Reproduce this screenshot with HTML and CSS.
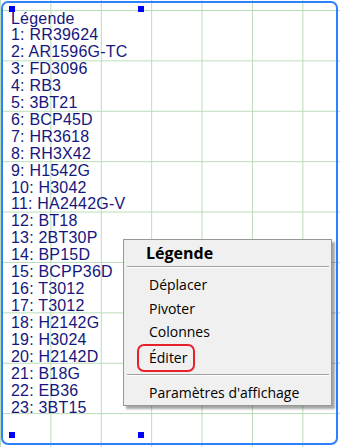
FILE: index.html
```html
<!DOCTYPE html>
<html lang="fr">
<head>
    <meta charset="UTF-8">
    <meta name="viewport" content="width=device-width, initial-scale=1.0">
    <title>Légende</title>
    <link rel="stylesheet" href="styles.css">
</head>
<body>
    <div class="canvas">
        <div class="legend">
            <div class="legend-title">Légende</div>
            <div>1: RR39624</div>
            <div>2: AR1596G-TC</div>
            <div>3: FD3096</div>
            <div>4: RB3</div>
            <div>5: 3BT21</div>
            <div>6: BCP45D</div>
            <div>7: HR3618</div>
            <div>8: RH3X42</div>
            <div>9: H1542G</div>
            <div>10: H3042</div>
            <div>11: HA2442G-V</div>
            <div>12: BT18</div>
            <div>13: 2BT30P</div>
            <div>14: BP15D</div>
            <div>15: BCPP36D</div>
            <div>16: T3012</div>
            <div>17: T3012</div>
            <div>18: H2142G</div>
            <div>19: H3024</div>
            <div>20: H2142D</div>
            <div>21: B18G</div>
            <div>22: EB36</div>
            <div>23: 3BT15</div>
        </div>

        <span class="handle tl"></span>
        <span class="handle tr"></span>
        <span class="handle bl"></span>
        <span class="handle br"></span>

        <div class="menu">
            <div class="menu-title">Légende</div>
            <div class="menu-sep"></div>
            <ul class="menu-items">
                <li>Déplacer</li>
                <li>Pivoter</li>
                <li>Colonnes</li>
                <li><span class="marked">Éditer</span></li>
            </ul>
            <div class="menu-sep low"></div>
            <ul class="menu-items">
                <li>Paramètres d'affichage</li>
            </ul>
        </div>
    </div>
</body>
</html>
```

FILE: styles.css
```css
* {
    box-sizing: border-box;
    margin: 0;
    padding: 0;
}
body {
    background: #fff;
    font-family: 'Liberation Sans', Arial, sans-serif;
}
.canvas {
    position: relative;
    width: 340px;
    height: 447px;
    padding: 1px 2px 2px 1px;
    background-color: #fff;
    background-image:
        linear-gradient(to right, #b9dcb9 1px, transparent 1px),
        linear-gradient(to bottom, #b9dcb9 1px, transparent 1px);
    background-size: 50.4px 50.4px;
    background-position: 0 10px;
}
.legend {
    height: 444px;
    border: 2px solid #2f80ff;
    border-radius: 7px;
    padding: 8px 0 0 8px;
    color: #16167e;
    font-size: 16px;
    line-height: 16.95px;
    letter-spacing: 0.2px;
}
.legend-title {
    margin-bottom: -1px;
}
.handle {
    position: absolute;
    width: 6px;
    height: 6px;
    background: #0000ff;
}
.tl { left: 9px; top: 6px; }
.tr { left: 138px; top: 6px; }
.bl { left: 9px; top: 432px; }
.br { left: 138px; top: 432px; }
.menu {
    position: absolute;
    left: 123px;
    top: 239px;
    width: 209px;
    height: 167px;
    background: #f0f0f0;
    border: 1px solid #979797;
    box-shadow: 3px 3px 2px rgba(0, 0, 0, 0.35);
    font-family: 'Open Sans', 'Noto Sans', sans-serif;
    font-size: 14px;
    color: #000;
}
.menu-title {
    height: 26px;
    padding-left: 22px;
    font-size: 16px;
    font-weight: bold;
    line-height: 26px;
}
.menu-sep {
    height: 2px;
    margin: 0 2px 5px 3px;
    border-top: 1px solid #a0a0a0;
    border-bottom: 1px solid #fff;
}
.menu-sep.low {
    margin-top: 7px;
    margin-bottom: 5px;
}
.menu-items {
    list-style: none;
}
.menu-items li {
    height: 23.5px;
    padding-left: 25px;
    line-height: 23.5px;
    white-space: nowrap;
}
.marked {
    display: inline-block;
    height: 28px;
    margin-left: -12px;
    padding: 0 6px 0 10px;
    border: 2px solid #e8202a;
    border-radius: 7px;
    line-height: 23px;
    vertical-align: top;
}
```
